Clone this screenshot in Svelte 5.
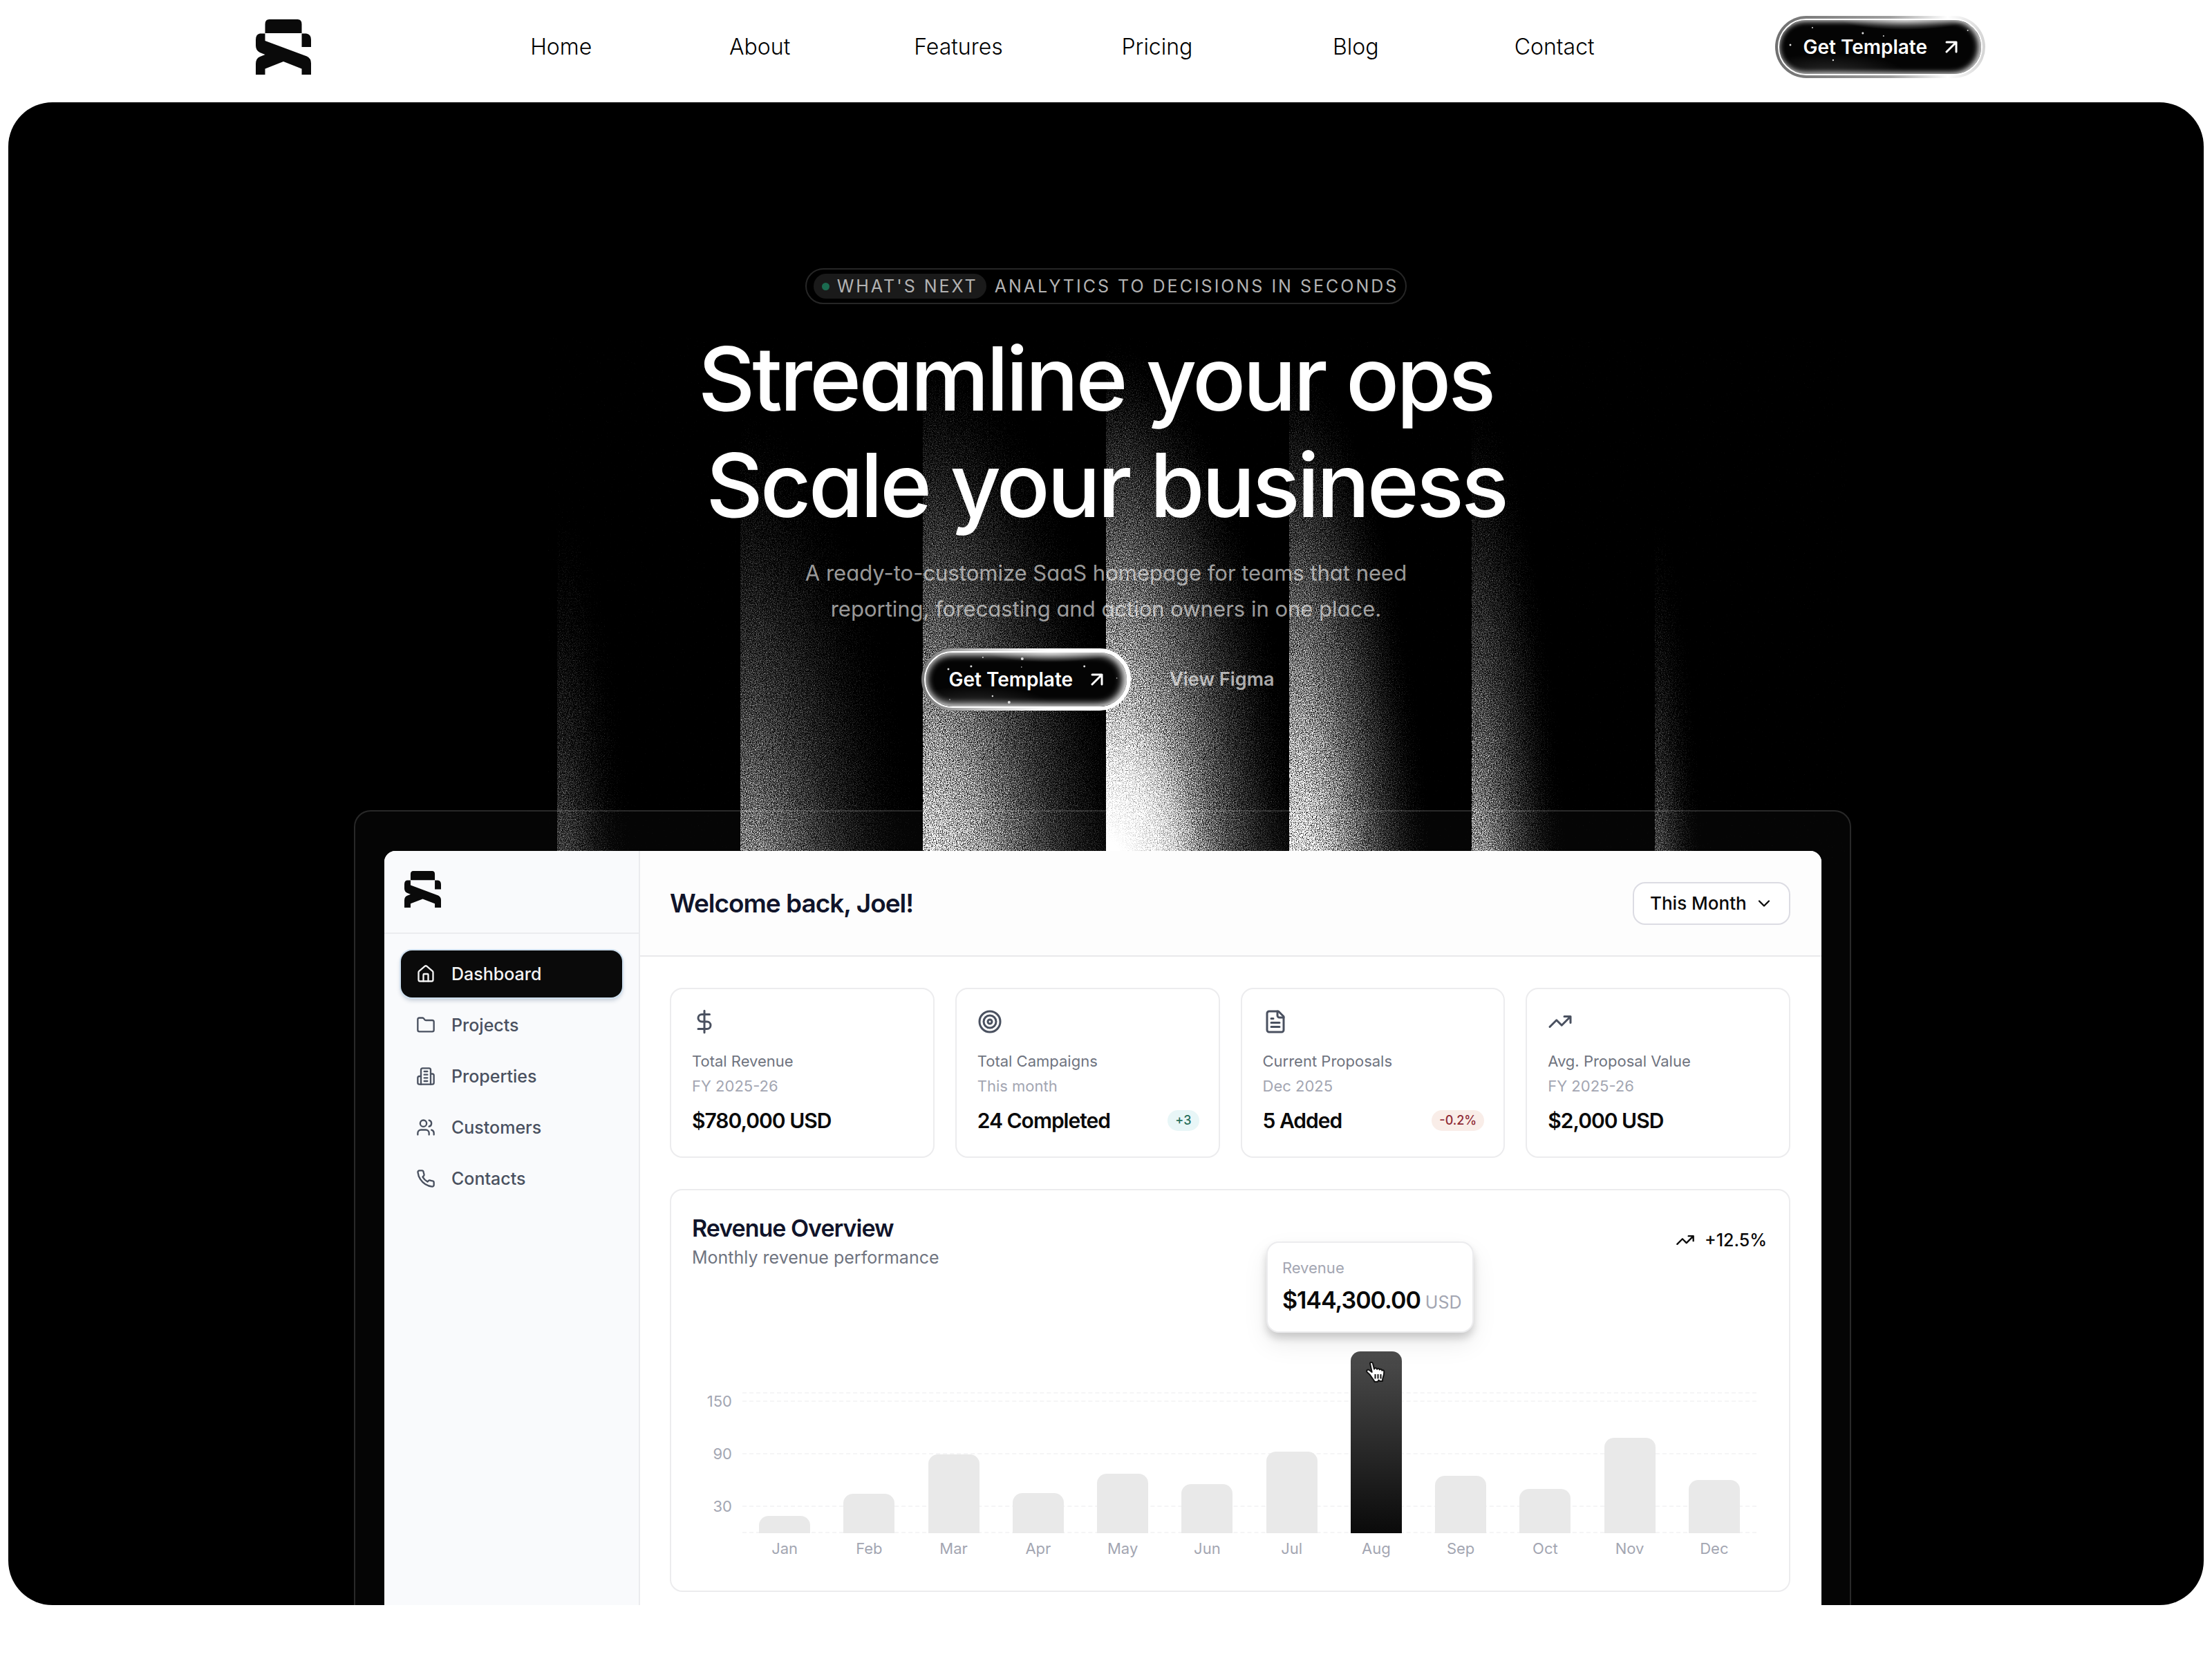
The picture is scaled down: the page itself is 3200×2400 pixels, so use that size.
<script>
  const links = ['Home', 'About', 'Features', 'Pricing', 'Blog', 'Contact']

  // each shaft of light starts at a column edge: column index, reach, width, brightness
  const shafts = [
    { col: 3, top: 720,  rx: 130, level: 0.33 },
    { col: 4, top: 590,  rx: 300, level: 0.53 },
    { col: 5, top: 500,  rx: 355, level: 0.86 },
    { col: 6, top: 490,  rx: 325, level: 1.25 },
    { col: 7, top: 520,  rx: 230, level: 1    },
    { col: 8, top: 570,  rx: 155, level: 0.6  },
    { col: 9, top: 740,  rx: 84,  level: 0.36 },
  ]
  const colWidth = 3176 / 12
  const glowY = 1700
  const falloff = [[0.36, 1], [0.46, 0.78], [0.56, 0.56], [0.66, 0.39], [0.76, 0.26], [0.88, 0.12], [1, 0]]

  const menu = [
    { label: 'Dashboard',  icon: 'home' },
    { label: 'Projects',   icon: 'folder' },
    { label: 'Properties', icon: 'building' },
    { label: 'Customers',  icon: 'users' },
    { label: 'Contacts',   icon: 'phone' },
  ]
  let current = $state('Dashboard')

  const stats = [
    { icon: 'dollar', label: 'Total Revenue',       period: 'FY 2025-26', value: '$780,000 USD' },
    { icon: 'target', label: 'Total Campaigns',     period: 'This month', value: '24 Completed', change: '+3' },
    { icon: 'file',   label: 'Current Proposals',   period: 'Dec 2025',   value: '5 Added', change: '-0.2%', down: true },
    { icon: 'trend',  label: 'Avg. Proposal Value', period: 'FY 2025-26', value: '$2,000 USD' },
  ]

  const scaleMax = 208
  const ticks = [
    { value: 160 },
    { value: 150, label: '150' },
    { value: 90,  label: '90' },
    { value: 30,  label: '30' },
    { value: 0 },
  ]
  const months = [
    { name: 'Jan', value: 20 },
    { name: 'Feb', value: 45 },
    { name: 'Mar', value: 90 },
    { name: 'Apr', value: 46 },
    { name: 'May', value: 68 },
    { name: 'Jun', value: 56 },
    { name: 'Jul', value: 93 },
    { name: 'Aug', value: 208 },
    { name: 'Sep', value: 66 },
    { name: 'Oct', value: 51 },
    { name: 'Nov', value: 109 },
    { name: 'Dec', value: 61 },
  ]
  let hovered = $state('Aug')
  let range = $state('This Month')

  const pct = v => (v / scaleMax) * 100
</script>

{#snippet logo()}
  <svg class="logo" viewBox="0 0 80 80" aria-hidden="true">
    <path d="M13.5 20V7q0-7 6-7h41q6 0 6 7v13z" />
    <path d="M66.5 20.500H73q7 1 7 9v10.500H66.5z" />
    <path d="M13.5 20.500V31L74 53.500q6 3 6 10V80H66.500v-8.500L40 61 13.500 71.500V80H0V64.500q0-8 6-10.500l7.500-3L6 48q-6-3-6-10v-8.500q0-8 6-9z" />
  </svg>
{/snippet}

{#snippet icon(name)}
  <svg class="icon" viewBox="0 0 24 24" aria-hidden="true">
    {#if name === 'home'}
      <path d="M15 21v-8a1 1 0 0 0-1-1h-4a1 1 0 0 0-1 1v8" />
      <path d="M3 10a2 2 0 0 1 .7-1.500l7-6a2 2 0 0 1 2.600 0l7 6A2 2 0 0 1 21 10v9a2 2 0 0 1-2 2H5a2 2 0 0 1-2-2z" />
    {:else if name === 'folder'}
      <path d="M20 20a2 2 0 0 0 2-2V8a2 2 0 0 0-2-2h-7.900a2 2 0 0 1-1.700-.9L9.600 3.900A2 2 0 0 0 7.900 3H4a2 2 0 0 0-2 2v13a2 2 0 0 0 2 2z" />
    {:else if name === 'building'}
      <path d="M6 22V4a2 2 0 0 1 2-2h8a2 2 0 0 1 2 2v18z" />
      <path d="M6 12H4a2 2 0 0 0-2 2v6a2 2 0 0 0 2 2h2M18 9h2a2 2 0 0 1 2 2v9a2 2 0 0 1-2 2h-2M10 6h4M10 10h4M10 14h4M10 18h4" />
    {:else if name === 'users'}
      <path d="M16 21v-2a4 4 0 0 0-4-4H6a4 4 0 0 0-4 4v2M22 21v-2a4 4 0 0 0-3-3.870M16 3.130a4 4 0 0 1 0 7.750" />
      <circle cx="9" cy="7" r="4" />
    {:else if name === 'phone'}
      <path d="M22 16.920v3a2 2 0 0 1-2.180 2 19.790 19.790 0 0 1-8.630-3.070 19.500 19.500 0 0 1-6-6 19.790 19.790 0 0 1-3.070-8.670A2 2 0 0 1 4.110 2h3a2 2 0 0 1 2 1.720 12.840 12.840 0 0 0 .7 2.810 2 2 0 0 1-.45 2.110L8.090 9.910a16 16 0 0 0 6 6l1.270-1.270a2 2 0 0 1 2.110-.45 12.840 12.840 0 0 0 2.810.7A2 2 0 0 1 22 16.920z" />
    {:else if name === 'dollar'}
      <path d="M12 1.500v21M17 5H9.500a3.500 3.500 0 0 0 0 7h5a3.500 3.500 0 0 1 0 7H6" />
    {:else if name === 'target'}
      <circle cx="12" cy="12" r="10" />
      <circle cx="12" cy="12" r="6" />
      <circle cx="12" cy="12" r="2" />
    {:else if name === 'file'}
      <path d="M15 2H6a2 2 0 0 0-2 2v16a2 2 0 0 0 2 2h12a2 2 0 0 0 2-2V7z" />
      <path d="M14 2v4a2 2 0 0 0 2 2h4M10 9H8M16 13H8M16 17H8" />
    {:else if name === 'trend'}
      <path d="M22 7l-8.500 8.500-5-5L2 17M16 7h6v6" />
    {:else if name === 'chevron'}
      <path d="M6 9l6 6 6-6" />
    {/if}
  </svg>
{/snippet}

{#snippet cta(stars)}
  <span class="cta-face">
    <svg class="stars" viewBox="0 0 304 90" aria-hidden="true">
      {#each stars as [x, y, r]}
        <circle cx={x} cy={y} {r} />
      {/each}
    </svg>
    <span>Get Template</span>
    <svg class="arrow" viewBox="0 0 18 18" aria-hidden="true"><path d="M2 2h14v14M16 2L2 16" /></svg>
  </span>
{/snippet}

<header class="topbar">
  <a class="brand" href="#home" aria-label="Home page">{@render logo()}</a>
  <nav class="links">
    {#each links as link}
      <a href="#{link.toLowerCase()}">{link}</a>
    {/each}
  </nav>
  <a class="cta" href="#template">
    {@render cta([[22, 42, 1.5], [54, 17, 1], [127, 25, 1.5], [157, 29, 1], [84, 64, 1.2], [279, 21, 1]])}
  </a>
</header>

<main class="hero">
  <svg class="light" viewBox="0 0 3176 2174" preserveAspectRatio="xMidYMin slice" aria-hidden="true">
    <defs>
      <filter id="grain" filterUnits="userSpaceOnUse" x="780" y="340" width="1880" height="780" color-interpolation-filters="sRGB">
        <feTurbulence type="fractalNoise" baseFrequency="0.8" numOctaves="2" seed="4" result="raw" />
        <feColorMatrix in="raw" type="matrix" values="1 0 0 0 0  1 0 0 0 0  1 0 0 0 0  0 0 0 0 1" result="noise" />
        <feComposite in="SourceGraphic" in2="noise" operator="arithmetic" k1="5" k2="-1.300" k3="0.300" k4="-0.220" result="mix" />
        <feColorMatrix in="mix" type="matrix" values="1 0 0 0 0  0 1 0 0 0  0 0 1 0 0  0 0 0 0 1" />
      </filter>
      <linearGradient id="shade">
        <stop offset="0.1" stop-color="#000" stop-opacity="0" />
        <stop offset="1" stop-color="#000" stop-opacity="0.6" />
      </linearGradient>
      <radialGradient
        id="core"
        gradientUnits="userSpaceOnUse"
        cx="0" cy="0" r="1"
        gradientTransform="translate({6 * colWidth} 1120) scale(140 260)"
      >
        <stop offset="0.2" stop-color="#fff" />
        <stop offset="1" stop-color="#fff" stop-opacity="0" />
      </radialGradient>
      {#each shafts as s}
        <radialGradient
          id="shaft{s.col}"
          gradientUnits="userSpaceOnUse"
          cx="0" cy="0" r="1"
          gradientTransform="translate({s.col * colWidth} {glowY - 148}) scale({s.rx} {glowY - s.top})"
        >
          {#each falloff as [offset, strength]}
            <stop {offset} stop-color="#fff" stop-opacity={Math.min(1, s.level * strength)} />
          {/each}
        </radialGradient>
      {/each}
    </defs>
    <g filter="url(#grain)">
      <rect x="780" y="340" width="1880" height="780" fill="#000" />
      {#each shafts as s}
        <rect x={Math.round(s.col * colWidth)} y="340" width={Math.round(colWidth)} height="780" fill="url(#shaft{s.col})" />
        <rect x={Math.round(s.col * colWidth)} y="340" width={Math.min(s.rx, Math.round(colWidth))} height="780" fill="url(#shade)" />
      {/each}
    </g>
    <rect x={6 * colWidth} y="840" width="180" height="280" fill="url(#core)" />
  </svg>

  <div class="intro">
    <p class="eyebrow"><span class="tag"><i></i>WHAT'S NEXT</span>ANALYTICS TO DECISIONS IN SECONDS</p>
    <h1>Streamline your ops&nbsp;<br />Scale your business</h1>
    <p class="lead">A ready-to-customize SaaS homepage for teams that need<br />reporting, forecasting and action owners in one place.</p>
    <div class="actions">
      <a class="cta bright" href="#template">
        {@render cta([[39, 30, 1.5], [72, 26, 1.5], [89, 13, 1], [146, 15, 2], [145, 27, 0.8], [236, 26, 1.5], [283, 43, 0.8], [103, 69, 1.2], [127, 78, 2], [41, 74, 0.8]])}
      </a>
      <a class="plain" href="#figma">View Figma</a>
    </div>
  </div>

  <div class="frame">
    <div class="app">
      <aside>
        <div class="aside-head">{@render logo()}</div>
        <nav class="menu">
          {#each menu as item}
            <button class:active={current === item.label} onclick={() => current = item.label}>
              {@render icon(item.icon)}
              {item.label}
            </button>
          {/each}
        </nav>
      </aside>

      <section class="board">
        <div class="board-head">
          <h2>Welcome back, Joel!</h2>
          <div class="range">
            <select aria-label="Period" bind:value={range}>
              <option>This Month</option>
              <option>Last Month</option>
            </select>
            {@render icon('chevron')}
          </div>
        </div>

        <div class="board-body">
          <div class="stats">
            {#each stats as stat}
              <article class="card stat">
                {@render icon(stat.icon)}
                <p class="label">{stat.label}</p>
                <p class="period">{stat.period}</p>
                <div class="value">
                  <strong>{stat.value}</strong>
                  {#if stat.change}
                    <span class="change" class:down={stat.down}>{stat.change}</span>
                  {/if}
                </div>
              </article>
            {/each}
          </div>

          <article class="card chart">
            <div class="chart-head">
              <div>
                <h3>Revenue Overview</h3>
                <p>Monthly revenue performance</p>
              </div>
              <span class="growth">{@render icon('trend')} +12.5%</span>
            </div>

            <div class="plot">
              {#each ticks as tick}
                <div class="tick" style="bottom: {pct(tick.value)}%">
                  <span>{tick.label ?? ''}</span>
                </div>
              {/each}
              <div class="bars">
                {#each months as m}
                  <div class="slot">
                    <!-- svelte-ignore a11y_no_static_element_interactions -->
                    <div class="bar" class:on={hovered === m.name} style="height: {pct(m.value)}%" onmouseenter={() => hovered = m.name}>
                      {#if hovered === m.name}
                        <div class="tip">
                          <span>Revenue</span>
                          <p><strong>$144,300.00</strong> USD</p>
                        </div>
                        <svg class="hand" viewBox="0 0 28 32" aria-hidden="true">
                          <path d="M6 3.500C6 1 9.500 1 10 3.500l2 8c.5-2 3.500-2 4 .3.600-1.700 3.400-1.500 3.800.7.800-1.300 3.200-1 3.500 1.200.9-1 2.900-.6 3 1.600.2 4-.6 6-1.600 8.500-.6 1.500-.7 3-.7 5.200h-4l-1.500-1.500L17 30h-4.500c-1-3-3-4.500-4.500-7-1.500-2.600-3-4.500-6-6.800-2.300-2 .4-4.700 2.700-3.200l4 3z" />
                          <path d="M13.500 19v6.500M17.500 19v6.500M21.500 19v6.500" />
                        </svg>
                      {/if}
                    </div>
                  </div>
                {/each}
              </div>
            </div>
            <div class="months">
              {#each months as m}
                <span>{m.name}</span>
              {/each}
            </div>
          </article>
        </div>
      </section>
    </div>
  </div>
</main>

<style>
  :global(body) { background: #fff; font-family: Inter, "Liberation Sans", sans-serif; }
  h1, h2, h3, p { margin: 0; }
  a { color: inherit; text-decoration: none; }
  button, select { font: inherit; cursor: pointer; }

  .logo { display: block; width: 80px; height: 80px; fill: #0a0a0a; }
  .icon {
    width: 28px;
    height: 28px;
    flex-shrink: 0;
    fill: none;
    stroke: currentColor;
    stroke-width: 2;
    stroke-linecap: round;
    stroke-linejoin: round;
  }

  /* ── Top bar ── */
  .topbar {
    display: flex;
    align-items: center;
    height: 148px;
    padding: 0 328px 12px 370px;
    box-sizing: border-box;
  }
  .links {
    flex: 1;
    display: grid;
    grid-template-columns: repeat(6, 1fr);
    margin: 0 176px 0 218px;
    font-size: 32px;
    font-weight: 350;
    line-height: 40px;
    text-align: center;
    color: #000;
  }

  .cta {
    display: block;
    padding: 4px;
    border-radius: 45px;
    background: linear-gradient(90deg, #707070, #a0a0a0 55%, #fff 82%, #d4d4d4);
  }
  .cta-face {
    position: relative;
    display: flex;
    align-items: center;
    gap: 26px;
    height: 82px;
    padding: 0 34px;
    box-sizing: border-box;
    border: 2px solid #fff;
    border-radius: 41px;
    background:
      radial-gradient(90px 14px at 62% 0, rgba(255, 255, 255, 0.6), transparent),
      radial-gradient(110px 30px at 25% 100%, rgba(255, 255, 255, 0.15), transparent),
      #040404;
    box-shadow: inset -3px 0 8px 1px rgba(255, 255, 255, 0.8), inset 0 0 8px rgba(255, 255, 255, 0.4);
    color: #fff;
    font-size: 28px;
    font-weight: 600;
    line-height: 40px;
    white-space: nowrap;
  }
  .cta.bright { background: linear-gradient(90deg, #777, #ccc 30%, #fff 60%); }
  .cta.bright .cta-face { box-shadow: inset -3px 0 12px 2px rgba(255, 255, 255, 0.85), inset 0 0 12px rgba(255, 255, 255, 0.6); }
  .stars { position: absolute; left: -6px; top: -6px; width: calc(100% + 12px); height: calc(100% + 12px); fill: #ddd; }
  .arrow { width: 18px; height: 18px; fill: none; stroke: #fff; stroke-width: 3; stroke-linecap: round; stroke-linejoin: round; }

  /* ── Hero ── */
  .hero {
    position: relative;
    margin: 0 12px;
    padding-top: 240px;
    overflow: hidden;
    border-radius: 64px;
    background: #000;
  }
  .light { position: absolute; inset: 0; width: 100%; height: 100%; }
  .intro {
    position: relative;
    display: flex;
    flex-direction: column;
    align-items: center;
    text-align: center;
    color: #fff;
  }
  .eyebrow {
    display: flex;
    align-items: center;
    gap: 12px;
    height: 52px;
    padding: 0 10px;
    box-sizing: border-box;
    border: 2px solid #262626;
    border-radius: 26px;
    color: #b3b3b3;
    font-size: 25px;
    letter-spacing: 3px;
    line-height: 36px;
  }
  .tag {
    display: flex;
    align-items: center;
    gap: 11px;
    padding: 0 12px;
    border-radius: 18px;
    background: #1a1a1a;
  }
  .tag i { width: 11px; height: 11px; border-radius: 50%; background: #1b6b50; }
  h1 {
    margin-top: 31px;
    font-size: 128px;
    font-weight: 500;
    line-height: 154px;
    letter-spacing: -4px;
    font-feature-settings: "cv11";
  }
  .lead {
    margin-top: 24px;
    color: rgba(255, 255, 255, 0.62);
    font-size: 31px;
    line-height: 52px;
    font-feature-settings: "cv11";
  }
  .actions { display: flex; align-items: center; gap: 32px; margin-top: 31px; }
  .plain { padding: 0 24px; color: rgba(255, 255, 255, 0.66); font-size: 27px; font-weight: 600; line-height: 40px; }

  /* ── Dashboard preview ── */
  .frame {
    position: relative;
    margin: 144px 510px 0 500px;
    padding: 57px 41px 0 42px;
    border: 2px solid rgba(255, 255, 255, 0.14);
    border-bottom: 0;
    border-radius: 24px 24px 0 0;
    background: rgba(255, 255, 255, 0.02);
  }
  .app {
    display: flex;
    overflow: hidden;
    border-radius: 16px 16px 0 0;
    background: #fff;
    color: #0a0a0a;
  }
  aside {
    width: 370px;
    flex-shrink: 0;
    box-sizing: border-box;
    border-right: 2px solid #ebecef;
    background: #f9fafc;
  }
  .aside-head { height: 120px; padding: 29px; box-sizing: border-box; border-bottom: 2px solid #ebecef; }
  .aside-head .logo { width: 53px; height: 53px; }
  .menu { display: flex; flex-direction: column; gap: 6px; padding: 24px; }
  .menu button {
    display: flex;
    align-items: center;
    gap: 23px;
    height: 68px;
    padding: 0 22px;
    border: 0;
    border-radius: 16px;
    background: none;
    color: #4a5160;
    font-size: 25px;
    font-weight: 500;
    line-height: 36px;
  }
  .menu .active { background: #0a0a0a; color: #f4f4f4; box-shadow: 0 0 0 2px #cfe0ef, 0 4px 6px rgba(20, 50, 90, 0.25); }

  .board { flex: 1; min-width: 0; }
  .board-head {
    display: flex;
    align-items: center;
    justify-content: space-between;
    height: 153px;
    padding: 0 45px 0 43px;
    box-sizing: border-box;
    border-bottom: 2px solid #e9e9eb;
    background: #fdfdfd;
  }
  h2 { color: #10142a; font-size: 37px; font-weight: 600; line-height: 44px; letter-spacing: -1px; }
  .range { position: relative; }
  .range select {
    width: 228px;
    height: 62px;
    padding: 0 23px;
    border: 2px solid #dcdce3;
    border-radius: 18px;
    background: #fff;
    color: #0a0a0a;
    font-size: 26px;
    font-weight: 500;
    appearance: none;
  }
  .range .icon { position: absolute; right: 24px; top: 17px; pointer-events: none; }

  .board-body { display: grid; gap: 45px; padding: 45px 45px 19px 43px; }
  .card { border: 2px solid #ececee; border-radius: 18px; box-sizing: border-box; }
  .stats { display: grid; grid-template-columns: repeat(4, 1fr); gap: 30px; }
  .stat { height: 246px; padding: 29px 28px 29px 30px; font-size: 22px; line-height: 36px; }
  .stat .icon { display: block; width: 36px; height: 36px; color: #4a5160; }
  .label { margin-top: 21px; color: #6f7480; }
  .period { color: #a3a6b2; }
  .value { display: flex; align-items: center; justify-content: space-between; margin-top: 14px; }
  .value strong { font-size: 30px; font-weight: 600; letter-spacing: -1px; }
  .change {
    padding: 0 11px;
    border-radius: 15px;
    background: #e8f6f7;
    color: #28705c;
    font-size: 18px;
    font-weight: 500;
    line-height: 30px;
  }
  .change.down { background: #f9ede8; color: #8f2a35; }

  .chart { padding: 34px 30px 45px; }
  .chart-head { display: flex; justify-content: space-between; margin-bottom: 115px; }
  h3 { color: #10142a; font-size: 34px; font-weight: 600; line-height: 42px; letter-spacing: -1px; }
  .chart-head p { color: #6f7480; font-size: 25px; line-height: 42px; }
  .growth { display: flex; align-items: center; gap: 14px; height: 76px; padding-right: 2px; font-size: 25px; font-weight: 500; }
  .plot { position: relative; height: 263px; margin: 0 17px 0 73px; }
  .tick { position: absolute; left: 0; right: 0; border-bottom: 2px dashed #f5f5f6; }
  .tick span {
    position: absolute;
    right: 100%;
    top: -15px;
    margin-right: 15px;
    color: #a3a6b2;
    font-size: 22px;
    line-height: 32px;
  }
  .bars, .months { display: grid; grid-template-columns: repeat(12, 1fr); }
  .bars { position: relative; height: 100%; }
  .slot { display: flex; justify-content: center; align-items: flex-end; }
  .bar { position: relative; width: 74px; border-radius: 14px 14px 0 0; background: #e9e9e9; }
  .bar.on { background: linear-gradient(#4c4c4c, #0a0a0a); }
  .hand { position: absolute; left: 22px; top: 14px; width: 28px; height: 32px; fill: #fff; stroke: #111; stroke-width: 2; stroke-linejoin: round; }
  .tip {
    position: absolute;
    right: -104px;
    bottom: calc(100% + 27px);
    width: 300px;
    height: 132px;
    padding: 19px 21px;
    box-sizing: border-box;
    border: 2px solid #ececee;
    border-radius: 18px;
    background: #fff;
    box-shadow: 0 8px 12px rgba(0, 0, 0, 0.16), 0 16px 36px rgba(0, 0, 0, 0.08);
    color: #a3a6b2;
    font-size: 22px;
    line-height: 34px;
    white-space: nowrap;
  }
  .tip p { margin-top: 6px; font-size: 25px; line-height: 48px; }
  .tip strong { color: #0a0a0a; font-size: 34px; font-weight: 600; letter-spacing: -1px; }
  .months { margin: 6px 17px 0 73px; color: #a3a6b2; font-size: 22px; line-height: 32px; text-align: center; }
</style>
